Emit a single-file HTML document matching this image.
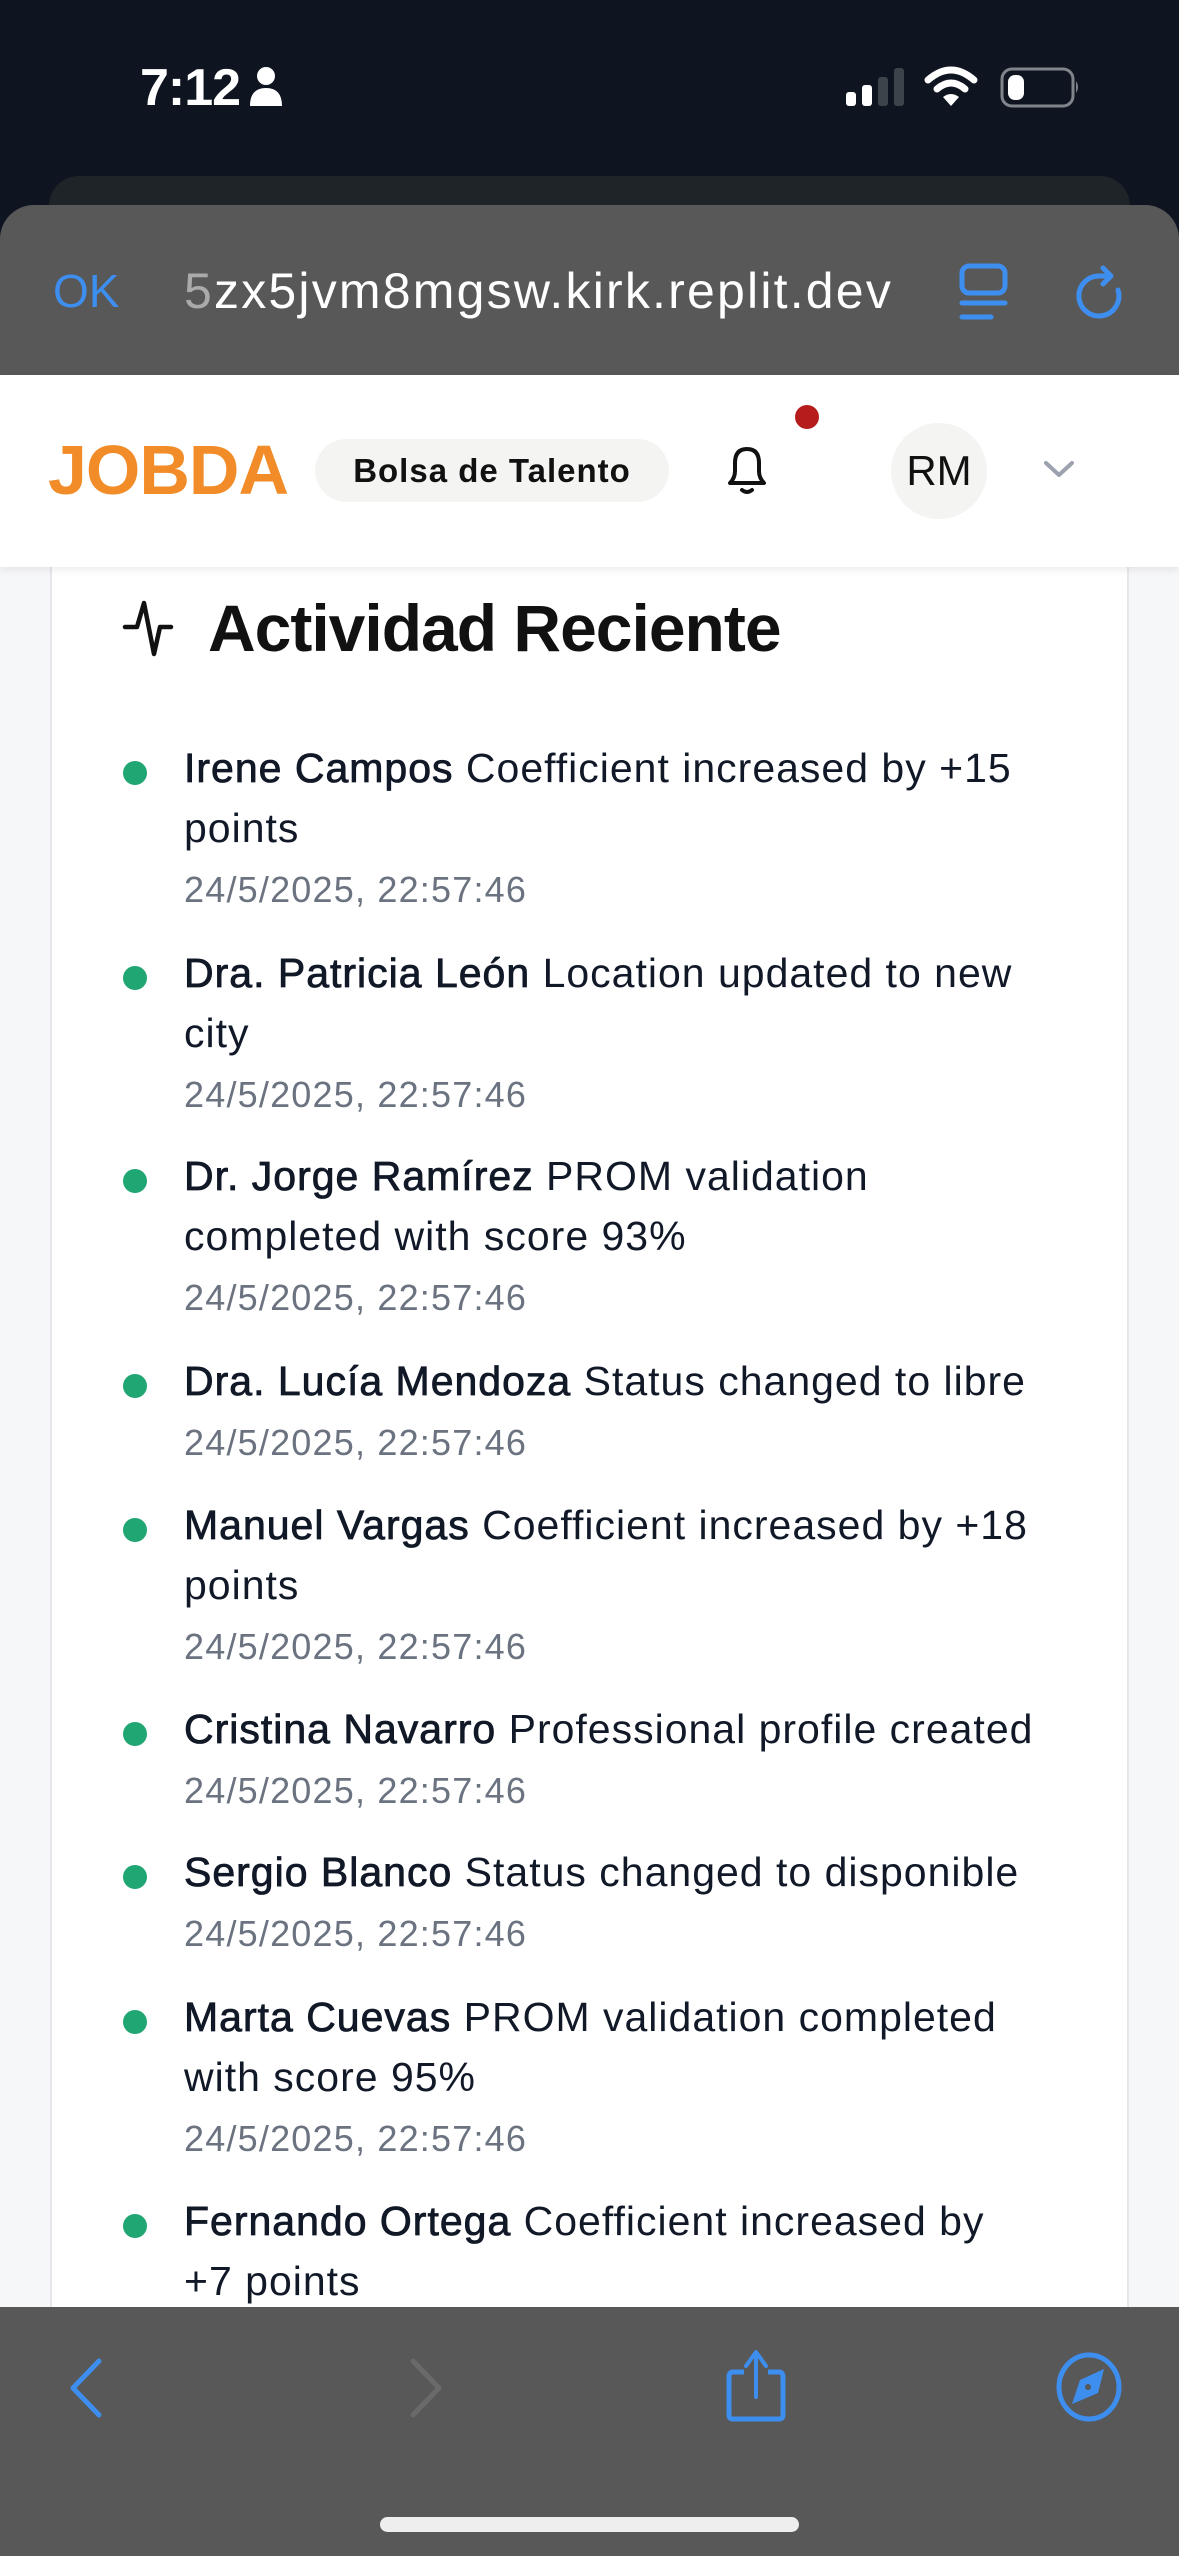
<!DOCTYPE html>
<html><head><meta charset="utf-8"><style>
*{margin:0;padding:0;box-sizing:border-box}
html,body{width:1179px;height:2556px;overflow:hidden;background:#f6f7f9;font-family:"Liberation Sans",sans-serif;position:relative}
.abs{position:absolute}
.item{position:absolute;left:184px;white-space:nowrap;color:#111827;font-size:41px;line-height:60px;letter-spacing:1px}
.item b{font-weight:400;-webkit-text-stroke:0.8px #111827}
.item .d{color:#6b7280;font-size:36px;line-height:40px;letter-spacing:1.2px}
.dot{position:absolute;left:123px;width:24px;height:24px;border-radius:50%;background:#1fa672}
</style></head><body>
<!-- status bar -->
<div class="abs" style="left:0;top:0;width:1179px;height:380px;background:#0e1420"></div>
<div class="abs" style="left:140px;top:58px;font-size:52px;color:#fff;font-weight:700;line-height:60px;letter-spacing:-1px">7:12</div>
<svg class="abs" style="left:248px;top:66px" width="40" height="42" viewBox="0 0 40 42"><circle cx="18" cy="10" r="9" fill="#fff"/><path d="M2 40 Q2 22 18 22 Q34 22 34 40 Z" fill="#fff"/></svg>
<svg class="abs" style="left:840px;top:62px" width="250" height="50" viewBox="0 0 250 50">
<rect x="6" y="30" width="10" height="14" rx="3" fill="#fff"/><rect x="22" y="23" width="10" height="21" rx="3" fill="#fff"/><rect x="38" y="15" width="10" height="29" rx="3" fill="#3d434b"/><rect x="54" y="6" width="10" height="38" rx="3" fill="#3d434b"/>
<path d="M88 18 Q111 -2 134 18" stroke="#fff" stroke-width="7" fill="none" stroke-linecap="round"/><path d="M97 27 Q111 15 125 27" stroke="#fff" stroke-width="7" fill="none" stroke-linecap="round"/><path d="M103 35 L111 44 L119 35 Q111 29 103 35Z" fill="#fff"/>
<rect x="162" y="7" width="71" height="37" rx="10" fill="none" stroke="#80858c" stroke-width="3"/><rect x="168" y="13" width="16" height="25" rx="7" fill="#fff"/><path d="M236 19 Q240 25 236 31Z" fill="#80858c"/>
</svg>
<!-- tab behind -->
<div class="abs" style="left:49px;top:176px;width:1081px;height:80px;border-radius:30px 30px 0 0;background:#1f2428"></div>
<!-- url bar -->
<div class="abs" style="left:0;top:205px;width:1179px;height:172px;border-radius:34px 34px 0 0;background:#585858"></div>
<div class="abs" style="left:53px;top:264px;font-size:46px;color:#3e8ef0;line-height:54px">OK</div>
<div class="abs" style="left:184px;top:262px;font-size:50px;color:#fff;line-height:58px;letter-spacing:2.2px"><span style="color:#aaa">5</span>zx5jvm8mgsw.kirk.replit.dev</div>
<svg class="abs" style="left:955px;top:260px" width="60" height="64" viewBox="0 0 60 64"><rect x="7" y="6" width="43" height="27" rx="7" fill="none" stroke="#3e8ef0" stroke-width="5"/><line x1="7" y1="43" x2="50" y2="43" stroke="#3e8ef0" stroke-width="5" stroke-linecap="round"/><line x1="7" y1="57" x2="36" y2="57" stroke="#3e8ef0" stroke-width="5" stroke-linecap="round"/></svg>
<svg class="abs" style="left:1070px;top:260px" width="64" height="64" viewBox="0 0 64 64"><path d="M48 30 A20 20 0 1 1 30 16 L40 16" fill="none" stroke="#3e8ef0" stroke-width="5" stroke-linecap="round"/><path d="M33 8 L41 16 L33 24" fill="none" stroke="#3e8ef0" stroke-width="5" stroke-linecap="round" stroke-linejoin="round"/></svg>
<!-- header -->
<div class="abs" style="left:0;top:375px;width:1179px;height:192px;background:#fff;box-shadow:0 3px 8px rgba(0,0,0,0.08);z-index:3"></div>
<div class="abs" style="left:48px;top:430px;font-size:70px;font-weight:700;color:#f28c28;line-height:80px;z-index:4;letter-spacing:-1px">JOBDA</div>
<div class="abs" style="left:315px;top:439px;width:354px;height:63px;border-radius:32px;background:#f4f4f2;z-index:4;font-size:33px;font-weight:700;color:#111;text-align:center;line-height:63px;letter-spacing:1px">Bolsa de Talento</div>
<svg class="abs" style="left:724px;top:445px;z-index:4" width="46" height="52" viewBox="0 0 46 52"><path d="M6 38 Q11 33 11 26 L11 18 Q11 4 23 4 Q35 4 35 18 L35 26 Q35 33 40 38 Z" fill="none" stroke="#111" stroke-width="4" stroke-linejoin="round"/><path d="M18 45 Q23 49 28 45" fill="none" stroke="#111" stroke-width="4" stroke-linecap="round"/></svg>
<div class="abs" style="left:795px;top:405px;width:24px;height:24px;border-radius:50%;background:#b71c1c;z-index:4"></div>
<div class="abs" style="left:891px;top:423px;width:96px;height:96px;border-radius:50%;background:#f4f4f2;z-index:4;text-align:center;line-height:96px;font-size:42px;color:#111">RM</div>
<svg class="abs" style="left:1043px;top:460px;z-index:4" width="32" height="20" viewBox="0 0 32 20"><path d="M3 3 L16 15 L29 3" fill="none" stroke="#9ca3af" stroke-width="4" stroke-linecap="round" stroke-linejoin="round"/></svg>
<!-- card -->
<div class="abs" style="left:50px;top:540px;width:1079px;height:1800px;background:#fff;border:2px solid #e5e7eb;border-radius:16px"></div>
<svg class="abs" style="left:122px;top:598px" width="52" height="62" viewBox="0 0 52 62"><path d="M3 29 L15 29 L22 5 L32 56 L38 29 L49 29" fill="none" stroke="#111" stroke-width="4.5" stroke-linecap="round" stroke-linejoin="round"/></svg>
<div class="abs" style="left:208px;top:590px;font-size:66px;font-weight:700;color:#111;line-height:76px;letter-spacing:-1px">Actividad Reciente</div>

<div class="dot" style="top:761px"></div><div class="item" style="top:738px"><b>Irene Campos</b> Coefficient increased by +15<br>points<br><span class="d">24/5/2025, 22:57:46</span></div>
<div class="dot" style="top:966px"></div><div class="item" style="top:943px"><b>Dra. Patricia León</b> Location updated to new<br>city<br><span class="d">24/5/2025, 22:57:46</span></div>
<div class="dot" style="top:1169px"></div><div class="item" style="top:1146px"><b>Dr. Jorge Ramírez</b> PROM validation<br>completed with score 93%<br><span class="d">24/5/2025, 22:57:46</span></div>
<div class="dot" style="top:1374px"></div><div class="item" style="top:1351px"><b>Dra. Lucía Mendoza</b> Status changed to libre<br><span class="d">24/5/2025, 22:57:46</span></div>
<div class="dot" style="top:1518px"></div><div class="item" style="top:1495px"><b>Manuel Vargas</b> Coefficient increased by +18<br>points<br><span class="d">24/5/2025, 22:57:46</span></div>
<div class="dot" style="top:1722px"></div><div class="item" style="top:1699px"><b>Cristina Navarro</b> Professional profile created<br><span class="d">24/5/2025, 22:57:46</span></div>
<div class="dot" style="top:1865px"></div><div class="item" style="top:1842px"><b>Sergio Blanco</b> Status changed to disponible<br><span class="d">24/5/2025, 22:57:46</span></div>
<div class="dot" style="top:2010px"></div><div class="item" style="top:1987px"><b>Marta Cuevas</b> PROM validation completed<br>with score 95%<br><span class="d">24/5/2025, 22:57:46</span></div>
<div class="dot" style="top:2214px"></div><div class="item" style="top:2191px"><b>Fernando Ortega</b> Coefficient increased by<br>+7 points<br><span class="d">24/5/2025, 22:57:46</span></div>

<!-- bottom toolbar -->
<div class="abs" style="left:0;top:2307px;width:1179px;height:249px;background:#575857;z-index:5"></div>
<svg class="abs" style="left:0;top:2340px;z-index:6" width="1179" height="100" viewBox="0 2340 1179 100">
<path d="M99 2361 L73 2388 L99 2415" fill="none" stroke="#3e8ef0" stroke-width="5" stroke-linecap="round" stroke-linejoin="round"/>
<path d="M413 2361 L439 2388 L413 2415" fill="none" stroke="#6a6a6a" stroke-width="5" stroke-linecap="round" stroke-linejoin="round"/>
<path d="M744 2372 L733 2372 Q729 2372 729 2377 L729 2415 Q729 2419 733 2419 L779 2419 Q783 2419 783 2415 L783 2377 Q783 2372 779 2372 L768 2372" fill="none" stroke="#3e8ef0" stroke-width="5" stroke-linejoin="round"/>
<path d="M756 2397 L756 2354 M746 2366 L756 2352 L766 2366" fill="none" stroke="#3e8ef0" stroke-width="4" stroke-linecap="round" stroke-linejoin="round"/>
<ellipse cx="1089" cy="2387" rx="30" ry="32" fill="none" stroke="#3e8ef0" stroke-width="5"/>
<path d="M1104 2369 L1079 2404 L1093 2384 Z M1104 2369 L1098 2393 L1072 2404 L1080 2380 Z" fill="#3e8ef0"/>
<circle cx="1088" cy="2387" r="3" fill="#575857"/>
</svg>
<div class="abs" style="left:380px;top:2517px;width:419px;height:15px;border-radius:8px;background:#eeeeee;z-index:6"></div>
</body></html>
